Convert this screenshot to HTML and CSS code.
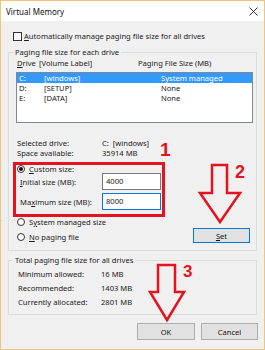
FILE: index.html
```html
<!DOCTYPE html>
<html>
<head>
<meta charset="utf-8">
<link rel="stylesheet" href="styles.css">
</head>
<body>
<div class="window">
  <div class="titlebar">
    <span class="title">Virtual Memory</span>
    <svg class="close" width="9" height="9" viewBox="0 0 9 9"><path d="M0.5 0.5L8.5 8.5M8.5 0.5L0.5 8.5" stroke="#333" stroke-width="1"/></svg>
  </div>
  <div class="body">
    <div class="check-row"><span class="checkbox"></span><span><u>A</u>utomatically manage paging file size for all drives</span></div>

    <fieldset class="group drives">
      <legend>Paging file size for each drive</legend>
      <div class="inner">
        <div class="list-header"><span class="h-drive"><u>D</u>rive</span><span class="h-label">[Volume Label]</span><span>Paging File Size (MB)</span></div>
        <div class="listbox">
          <div class="row selected"><span class="c-drive">C:</span><span class="c-label">[windows]</span><span>System managed</span></div>
          <div class="row"><span class="c-drive">D:</span><span class="c-label">[SETUP]</span><span>None</span></div>
          <div class="row"><span class="c-drive">E:</span><span class="c-label">[DATA]</span><span>None</span></div>
        </div>
        <div class="info">
          <span>Selected drive:</span><span>C:&nbsp;&nbsp;[windows]</span>
          <span>Space available:</span><span>35914 MB</span>
        </div>
        <div class="radio-row custom"><span class="radio checked"></span><span><u>C</u>ustom size:</span></div>
        <div class="field-grid">
          <span class="f-label"><u>I</u>nitial size (MB):</span><span class="input">4000</span>
          <span class="f-label">Ma<u>x</u>imum size (MB):</span><span class="input focused">8000</span>
        </div>
        <div class="bottom-row">
          <div class="radios">
            <div class="radio-row"><span class="radio"></span><span>S<u>y</u>stem managed size</span></div>
            <div class="radio-row second"><span class="radio"></span><span><u>N</u>o paging file</span></div>
          </div>
          <span class="btn set"><u>S</u>et</span>
        </div>
      </div>
    </fieldset>

    <fieldset class="group total">
      <legend>Total paging file size for all drives</legend>
      <div class="totals">
        <span>Minimum allowed:</span><span>16 MB</span>
        <span>Recommended:</span><span>1403 MB</span>
        <span>Currently allocated:</span><span>2801 MB</span>
      </div>
    </fieldset>

    <div class="buttons">
      <span class="btn ok">OK</span>
      <span class="btn cancel">Cancel</span>
    </div>
  </div>

  <svg class="annotations" width="265" height="350" viewBox="0 0 265 350">
    <rect x="14.5" y="163.5" width="149" height="52" fill="none" stroke="#e3131f" stroke-width="3"/>
    <text x="160" y="156" class="num" font-size="19">1</text>
    <text x="235" y="178" class="num" font-size="18">2</text>
    <text x="183" y="277" class="num" font-size="17">3</text>
    <path d="M212 165H227V193H240L220 222L200 193H212Z" fill="none" stroke="#e3131f" stroke-width="2.5" stroke-linejoin="miter"/>
    <path d="M158 265H175V292H184L167 320L150 292H158Z" fill="none" stroke="#e3131f" stroke-width="2.5" stroke-linejoin="miter"/>
  </svg>
</div>
</body>
</html>
```

FILE: styles.css
```css
* { box-sizing: border-box; }
html, body { margin: 0; padding: 0; background: #ffffff; }
body {
  font-family: "Noto Sans", "Liberation Sans", sans-serif;
  font-size: 7.6px;
  color: #1a1a1a;
}
.window {
  position: relative;
  width: 265px;
  height: 350px;
  border: 1px solid #f2c27f;
  background: #f0f0f0;
  overflow: hidden;
}
.titlebar {
  height: 20px;
  background: #ffffff;
  display: flex;
  align-items: center;
  justify-content: space-between;
  padding: 0 5px 0 5px;
}
.title { font-size: 8px; color: #111; }
.close { display: block; margin-right: 1px; }
.body {
  height: 328px;
  display: flex;
  flex-direction: column;
}
.check-row {
  display: flex;
  align-items: center;
  height: 10px;
  line-height: 10px;
  margin: 10px 0 0 12px;
  white-space: nowrap;
}
.checkbox {
  width: 9px;
  height: 9px;
  border: 1px solid #333;
  background: #fff;
  margin-right: 2px;
  flex: none;
}
.group {
  margin: 6px 0 0 7px;
  width: 249px;
  padding: 0;
  border: 1px solid #dcdcdc;
  min-width: 0;
}
.group legend {
  margin-left: 4px;
  padding: 0 2px;
  line-height: 10px;
  height: 10px;
  white-space: nowrap;
}
.drives .inner { padding: 0 0 8px 8px; }
.list-header {
  display: flex;
  height: 10px;
  line-height: 10px;
  margin-top: 1px;
  white-space: nowrap;
}
.h-drive { width: 22px; }
.h-label { width: 99px; }
.listbox {
  margin: 4px 0 0 -1px;
  width: 237px;
  height: 51px;
  background: #fff;
  border: 1px solid #828790;
}
.row {
  display: flex;
  height: 10px;
  line-height: 10px;
  padding-left: 2px;
  white-space: nowrap;
}
.row.selected { background: #3399ff; color: #fff; }
.c-drive { width: 25px; }
.c-label { width: 117px; }
.info {
  display: grid;
  grid-template-columns: 85px auto;
  grid-auto-rows: 10px;
  line-height: 10px;
  margin-top: 15px;
  white-space: nowrap;
}
.radio-row {
  display: flex;
  align-items: center;
  height: 10px;
  line-height: 10px;
  white-space: nowrap;
}
.radio-row.custom { margin-top: 6px; height: 9px; }
.radio {
  width: 8px;
  height: 8px;
  border: 1px solid #333;
  border-radius: 50%;
  background: #fff;
  margin-right: 4px;
  flex: none;
  display: flex;
  align-items: center;
  justify-content: center;
}
.radio.checked::after {
  content: "";
  width: 4px;
  height: 4px;
  border-radius: 50%;
  background: #111;
}
.field-grid {
  display: grid;
  grid-template-columns: 85px 59px;
  grid-auto-rows: 17px;
  row-gap: 3px;
  align-items: center;
}
.f-label { padding-left: 3px; white-space: nowrap; }
.input {
  height: 17px;
  line-height: 15px;
  background: #fff;
  border: 1px solid #7a7a7a;
  padding-left: 3px;
}
.input.focused { border-color: #0078d7; }
.bottom-row {
  display: flex;
  align-items: flex-end;
  margin-top: 7px;
}
.radio-row.second { margin-top: 5px; }
.btn {
  display: flex;
  align-items: center;
  justify-content: center;
  background: #e1e1e1;
  border: 1px solid #adadad;
  color: #111;
}
.btn.set {
  margin-left: auto;
  margin-right: 6px;
  margin-bottom: -1px;
  width: 57px;
  height: 15px;
  border-color: #0078d7;
}
.total { margin-top: 4px; }
.totals {
  display: grid;
  grid-template-columns: 83px auto;
  grid-auto-rows: 10px;
  row-gap: 4px;
  line-height: 10px;
  padding: 4px 0 7px 9px;
  white-space: nowrap;
}
.buttons {
  display: flex;
  justify-content: flex-end;
  gap: 6px;
  margin-top: 8px;
  padding-right: 6px;
}
.btn.ok { width: 58px; height: 17px; }
.btn.cancel { width: 57px; height: 17px; }
.annotations {
  position: absolute;
  left: -1px;
  top: -1px;
  pointer-events: none;
}
.num {
  font-family: "Liberation Sans", Arial, sans-serif;
  font-weight: bold;
  fill: #e3131f;
}
```
